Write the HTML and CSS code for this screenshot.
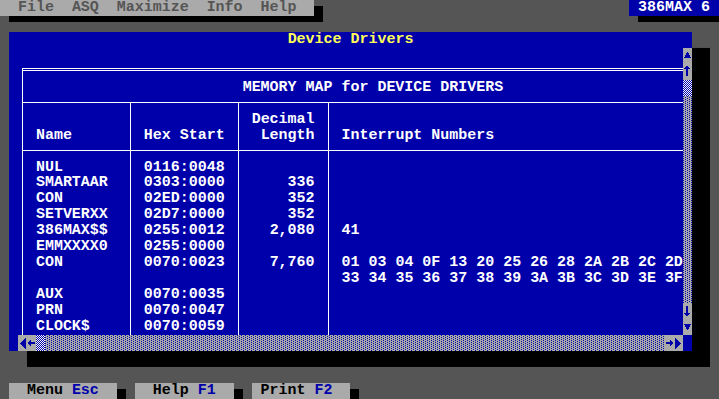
FILE: index.html
```html
<!DOCTYPE html>
<html lang="en">
<head>
<meta charset="utf-8">
<title>386MAX - Device Drivers</title>
<link rel="stylesheet" href="styles.css">
</head>
<body>
<div class="screen">
  <header class="topbar">
    <nav class="menubar">
      <span>File</span><span>ASQ</span><span>Maximize</span><span>Info</span><span>Help</span>
    </nav>
    <div class="product">386MAX 6</div>
  </header>

  <section class="window">
    <h1 class="title">Device Drivers</h1>
    <div class="main">
      <div class="viewport">
        <div class="panel">
          <div class="caption">MEMORY MAP for DEVICE DRIVERS</div>
          <div class="cols">
            <div class="col col-name">
              <div class="head"><span>Name</span></div>
              <ul class="cells">
                <li>NUL</li><li>SMARTAAR</li><li>CON</li><li>SETVERXX</li><li>386MAX$$</li><li>EMMXXXX0</li><li>CON</li><li></li><li>AUX</li><li>PRN</li><li>CLOCK$</li>
              </ul>
            </div>
            <div class="col col-hex">
              <div class="head"><span>Hex Start</span></div>
              <ul class="cells">
                <li>0116:0048</li><li>0303:0000</li><li>02ED:0000</li><li>02D7:0000</li><li>0255:0012</li><li>0255:0000</li><li>0070:0023</li><li></li><li>0070:0035</li><li>0070:0047</li><li>0070:0059</li>
              </ul>
            </div>
            <div class="col col-dec">
              <div class="head"><span>Decimal</span><span>Length</span></div>
              <ul class="cells">
                <li></li><li>336</li><li>352</li><li>352</li><li>2,080</li><li></li><li>7,760</li><li></li><li></li><li></li><li></li>
              </ul>
            </div>
            <div class="col col-int">
              <div class="head"><span>Interrupt Numbers</span></div>
              <ul class="cells">
                <li></li><li></li><li></li><li></li><li>41</li><li></li><li>01 03 04 0F 13 20 25 26 28 2A 2B 2C 2D</li><li>33 34 35 36 37 38 39 3A 3B 3C 3D 3E 3F</li><li></li><li></li><li></li>
              </ul>
            </div>
          </div>
        </div>
      </div>

      <div class="vscroll">
        <div class="sb-btn"><svg viewBox="0 0 9 16"><path d="M4 4h1v1h1v2h1v2h1v1H1V9h1V7h1V5h1z"/></svg></div>
        <div class="sb-btn"><svg viewBox="0 0 9 16"><path d="M3 2h2v1h1v1h1v1H5v7H3V5H1V4h1V3h1z"/></svg></div>
        <div class="thumb"></div>
        <div class="track"></div>
        <div class="sb-btn"><svg viewBox="0 0 9 16"><path d="M3 3h2v7h2v1H6v1H5v1H3v-1H2v-1H1v-1h2z"/></svg></div>
        <div class="sb-btn"><svg viewBox="0 0 9 16"><path d="M1 5h7v1H7v2H6v2H5v1H4v-1H3V8H2V6H1z"/></svg></div>
      </div>

      <div class="hscroll">
        <div class="sb-btn"><svg viewBox="0 0 9 16"><path d="M7 3h1v11H7v-1H6v-1H5v-1H4v-1H3V9H2V8h1V7h1V6h1V5h1V4h1z"/></svg></div>
        <div class="sb-btn"><svg viewBox="0 0 9 16"><path d="M8 7H4V5H3v1H2v1H1v2h1v1h1v1h1V9h4z"/></svg></div>
        <div class="thumb"></div>
        <div class="track"></div>
        <div class="sb-btn"><svg viewBox="0 0 9 16"><path d="M1 7h4V5h1v1h1v1h1v2H7v1H6v1H5V9H1z"/></svg></div>
        <div class="sb-btn"><svg viewBox="0 0 9 16"><path d="M1 3h1v1h1v1h1v1h1v1h1v1h1v1H6v1H5v1H4v1H3v1H2v1H1z"/></svg></div>
      </div>
    </div>
  </section>

  <footer class="keys">
    <div class="key key-menu">Menu <b>Esc</b></div>
    <div class="key key-help">Help <b>F1</b></div>
    <div class="key key-print">Print <b>F2</b></div>
  </footer>
</div>
</body>
</html>
```
FILE: styles.css
```css
:root {
  --c: 8.9875px;
  --r: 15.96px;
  --blue: #0000aa;
  --grey: #aaaaaa;
  --dark: #555555;
}

* { box-sizing: border-box; }

html, body {
  margin: 0;
  padding: 0;
}

body {
  width: 719px;
  height: 399px;
  overflow: hidden;
  background: var(--dark);
  font-family: "Liberation Mono", "DejaVu Sans Mono", monospace;
  font-weight: bold;
  font-size: 14.98px;
  line-height: var(--r);
  color: #fff;
}

.screen {
  height: 399px;
  display: flex;
  flex-direction: column;
}

/* ---------- top bar ---------- */
.topbar {
  flex: none;
  height: var(--r);
  display: flex;
  justify-content: space-between;
}

.menubar {
  display: flex;
  gap: calc(2 * var(--c));
  padding: 0 calc(2 * var(--c));
  background: var(--grey);
  color: var(--dark);
  box-shadow: 9px 6px 0 #000;
}

.product {
  width: calc(10 * var(--c));
  padding-left: var(--c);
  background: var(--blue);
  color: #fff;
  box-shadow: 9px 6px 0 #000;
  white-space: pre;
}

/* ---------- window ---------- */
.window {
  flex: none;
  margin: var(--r) 0 0 var(--c);
  width: calc(76 * var(--c));
  height: calc(20 * var(--r));
  background: var(--blue);
  box-shadow: calc(2 * var(--c)) var(--r) 0 #000;
  display: flex;
  flex-direction: column;
}

.title {
  flex: none;
  margin: 0;
  height: var(--r);
  font: inherit;
  color: #ffff55;
  text-align: center;
}

.main {
  display: grid;
  grid-template-columns: var(--c) calc(74 * var(--c)) var(--c);
  grid-template-rows: calc(18 * var(--r)) var(--r);
}

.viewport {
  grid-row: 1;
  grid-column: 2;
  overflow: hidden;
  padding-top: calc(var(--r) + 4.4px);
  padding-left: 4px;
  display: flex;
  flex-direction: column;
}

.panel {
  flex: 1;
  min-height: 0;
  border-top: 3px double #fff;
  border-left: 1px solid #fff;
  display: flex;
  flex-direction: column;
}

.caption {
  flex: none;
  box-sizing: content-box;
  height: var(--r);
  padding: 8.56px 0 6.54px calc(25 * var(--c) - 5px);
  border-bottom: 1px solid #fff;
  white-space: pre;
}

.cols {
  flex: 1;
  display: flex;
  min-height: 0;
}

.col {
  flex: none;
  display: flex;
  flex-direction: column;
  border-right: 1px solid #fff;
  overflow: hidden;
}

.col-name, .col-hex { width: calc(12 * var(--c)); }
.col-dec { width: calc(10 * var(--c)); text-align: right; }
.col-int { flex: 1; border-right: none; }

.head {
  flex: none;
  box-sizing: content-box;
  height: calc(2 * var(--r));
  padding-top: 8.42px;
  padding-bottom: 6.4px;
  border-bottom: 1px solid #fff;
  display: flex;
  flex-direction: column;
  justify-content: flex-end;
}

.head span { white-space: pre; }

.cells {
  flex: none;
  margin: 0;
  padding: 8.56px 0 0;
  list-style: none;
}

.cells li {
  height: var(--r);
  white-space: pre;
}

.col-name .head, .col-name .cells,
.col-hex .head, .col-hex .cells,
.col-int .head, .col-int .cells {
  padding-left: calc(2 * var(--c) - 5px);
}

.col-dec .head, .col-dec .cells {
  padding-right: calc(var(--c) + 4px);
}

/* ---------- scrollbars ---------- */
.vscroll {
  grid-row: 1;
  grid-column: 3;
  display: flex;
  flex-direction: column;
}

.hscroll {
  grid-row: 2;
  grid-column: 2;
  display: flex;
}

.sb-btn {
  width: var(--c);
  height: var(--r);
  flex: none;
  background: var(--grey);
}

.sb-btn svg {
  display: block;
  width: 9px;
  height: 16px;
  fill: var(--blue);
  shape-rendering: crispEdges;
}

.thumb {
  flex: none;
  width: var(--c);
  height: var(--r);
  background: repeating-conic-gradient(#ffffff 0 25%, var(--blue) 0 50%) 0 0 / 2px 2px;
}

.track {
  flex: 1;
  background-color: var(--grey);
  background-image:
    conic-gradient(at 1px 1px, transparent 0 270deg, var(--blue) 270deg),
    conic-gradient(at 1px 1px, transparent 0 270deg, var(--blue) 270deg);
  background-size: 4px 2px;
  background-position: 0 0, 2px 1px;
}

/* ---------- function keys ---------- */
.keys {
  flex: none;
  margin-top: auto;
  height: var(--r);
  display: flex;
  gap: calc(2 * var(--c));
  padding-left: var(--c);
}

.key {
  background: var(--grey);
  color: #000;
  white-space: pre;
  box-shadow: 9px 6px 0 #000;
  padding-right: calc(2 * var(--c));
}

.key b {
  font-weight: bold;
  color: var(--blue);
}

.key-menu, .key-help { padding-left: calc(2 * var(--c)); }
.key-print { padding-left: var(--c); }
```
